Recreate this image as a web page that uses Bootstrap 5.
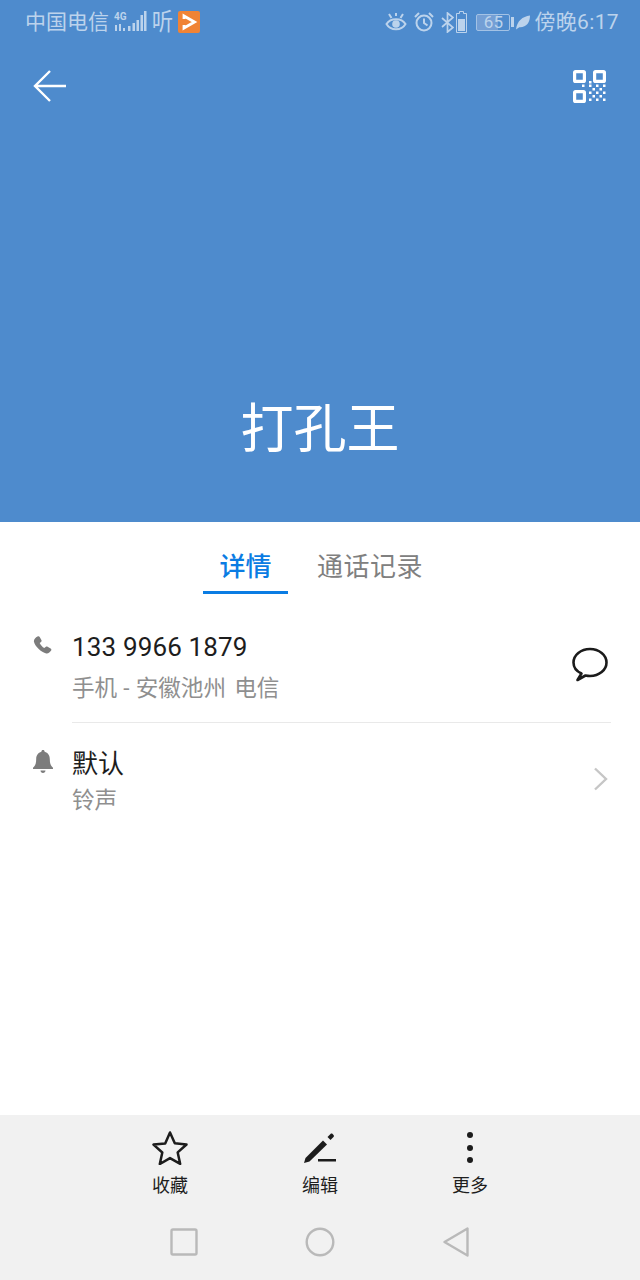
<!DOCTYPE html>
<html lang="zh"><head><meta charset="utf-8"><title>打孔王</title>
<link href="https://cdn.jsdelivr.net/npm/bootstrap@5.3.0/dist/css/bootstrap.min.css" rel="stylesheet">
<style>
html,body{width:640px;height:1280px;overflow:hidden;background:#fff}
body,.app-shell{font-family:Roboto,"Noto Sans CJK SC",sans-serif}
.app-shell{width:640px;height:1280px}
.hero-pane{height:522px;background:#4e8bcd;color:#fff}
.status-row{height:44px;padding:0 21px 0 25px;color:#bcd3ec;font-size:21px;line-height:44px}
.status-row svg{display:block;flex:none}
.gap-sig{margin-left:5px}
.gap-ting{margin-left:5px;display:inline-block;transform:scale(1.02,1.12)}
.gap-logo{margin-left:5px}
.gap-clock{margin-left:7px}
.gap-bt{margin-left:7px}
.gap-cell{margin-left:2px}
.batt-box{margin-left:9px;width:34px;height:17px;border:1px solid #a3c2e5;border-radius:2px;font-size:17px;line-height:15px;text-align:center;background:linear-gradient(90deg,#749fd5 65%,transparent 65%)}
.gap-tail{margin-left:1px}
.gap-leaf{margin-left:2px}
.clock-text{margin-left:4px;letter-spacing:.35px}
.tool-row{height:84px;padding:0 34px 0 33px}
.contact-name{font-size:53px;line-height:60px;padding-bottom:62px}
.tab-strip{height:72px;padding-left:203px;gap:29px}
.tab-item{font-size:26px;line-height:36px;height:72px;padding-top:27px;color:#808080;text-align:center}
.tab-item.is-log{letter-spacing:.5px}
.tab-item.is-on{width:85px;color:#0a7ce3;border-bottom:3px solid #0a7ce3;font-weight:500}
.info-row{padding:0 32px 0 33px}
.info-ico{width:39px;flex:none}
.phone-ico{margin-top:7px}
.bell-ico{margin-top:4px}
.msg-ico{margin-top:18px}
.chev-ico{margin-top:21px}
.row-phone{height:128px;padding-top:35px}
.row-ring{padding-top:23px}
.main-text{font-size:26px;line-height:36px;color:#1d1d1d}
.num-text{letter-spacing:.15px}
.sub-text{font-size:22.6px;line-height:36px;color:#8f8f8f}
.row-phone .sub-text{margin-top:6px;word-spacing:.5px}
.carrier-gap{margin-left:2px}
.row-ring .sub-text{line-height:38px}
.rule-line{margin-left:72px;margin-right:29px;height:1px;background:#e9e9e9}
.bottom-pane{height:165px;background:#f1f1f1}
.act-row{height:94px;padding-top:15px}
.act-cell{width:150px;font-size:18px;line-height:24px;color:#1e1e1e;text-align:center}
.act-cell svg{display:block;margin:0 auto 9px}
.nav-row{height:71px;padding-bottom:5px}
.nav-cell{width:136px}
.nav-cell svg{display:block;margin:0 auto}
</style></head>
<body>
<div class="app-shell d-flex flex-column">
  <section class="hero-pane d-flex flex-column">
    <div class="status-row d-flex align-items-center justify-content-between">
      <div class="d-flex align-items-center">
        <span>中国电信</span>
        <svg width="33" height="24" viewBox="0 0 33 24" class="gap-sig"><g fill="#bcd3ec"><text x="0" y="10" font-size="10" font-family="Roboto" font-weight="700">4G</text><rect x="1" y="15" width="2" height="6"/><rect x="5" y="14" width="2" height="7"/><rect x="9" y="18" width="2" height="3"/><rect x="14" y="16" width="2.500" height="5"/><rect x="18.500" y="13" width="2.500" height="8"/><rect x="22.500" y="10" width="2.500" height="11"/><rect x="26.500" y="5" width="2.500" height="16"/><rect x="30" y="1" width="2.500" height="20"/></g></svg>
        <span class="gap-ting">听</span>
        <svg width="22" height="22" viewBox="0 0 22 22" class="gap-logo"><rect width="22" height="22" rx="2" fill="#f08335"/><path d="M6 8V5l10.500 6L6 17v-3" fill="none" stroke="#fff" stroke-width="2.800"/></svg>
      </div>
      <div class="d-flex align-items-center">
        <svg width="22" height="20" viewBox="0 0 22 20"><g fill="none" stroke="#bcd3ec" stroke-width="2"><path d="M1.500 12c4-6.500 15-6.500 19 0-4 7-15 7-19 0z"/><path d="M4 2l2.500 4M18 2l-2.500 4M11 1v3"/></g><circle cx="11" cy="12" r="3.800" fill="#bcd3ec"/></svg>
        <svg width="20" height="20" viewBox="0 0 20 20" class="gap-clock"><g fill="none" stroke="#bcd3ec" stroke-width="2"><circle cx="10" cy="11" r="7.500"/><path d="M10 6.500V11l3.500 2.500M1 5l4-4M19 5l-4-4"/></g></svg>
        <svg width="13" height="21" viewBox="0 0 13 21" class="gap-bt"><path d="M1 6l11 9.500-5.500 4.500V1L12 5.500 1 15" fill="none" stroke="#bcd3ec" stroke-width="1.700"/></svg>
        <svg width="11" height="22" viewBox="0 0 11 22" class="gap-cell"><path d="M3.500.5h4v2h3v19H.5v-19h3z" fill="none" stroke="#bcd3ec"/><rect x="2" y="8" width="7" height="12" fill="#bcd3ec"/></svg>
        <div class="batt-box">65</div>
        <svg width="3" height="10" viewBox="0 0 3 10" class="gap-tail"><rect width="3" height="10" fill="#bcd3ec"/></svg>
        <svg width="14" height="15" viewBox="0 0 15 15" class="gap-leaf"><path d="M0 15C1 6 7 1 15 0c0 8-4 13-11.500 12.500z" fill="#bcd3ec"/></svg>
        <span class="clock-text">傍晚6:17</span>
      </div>
    </div>
    <div class="tool-row d-flex align-items-center justify-content-between">
      <svg width="34" height="34" viewBox="0 0 34 34" fill="none" stroke="#fff" stroke-width="2.400"><path d="M17 2L2 17l15 15M2 17h31"/></svg>
      <svg width="33" height="33" viewBox="0 0 33 33"><g fill="none" stroke="#fff" stroke-width="3.200"><rect x="1.600" y="1.600" width="9.800" height="9.800" rx="1"/><rect x="21.600" y="1.600" width="9.800" height="9.800" rx="1"/><rect x="1.600" y="21.600" width="9.800" height="9.800" rx="1"/></g><g fill="#fff"><rect x="16" y="11" width="2.500" height="2.500"/><rect x="9" y="14.500" width="2.500" height="2.500"/><rect x="16" y="14.500" width="2.500" height="2.500"/><rect x="23" y="14.500" width="2.500" height="2.500"/><rect x="30" y="14.500" width="2.500" height="2.500"/><rect x="19.500" y="18" width="2.500" height="2.500"/><rect x="26.500" y="18" width="2.500" height="2.500"/><rect x="16" y="21.500" width="2.500" height="2.500"/><rect x="23" y="21.500" width="2.500" height="2.500"/><rect x="30" y="21.500" width="2.500" height="2.500"/><rect x="19.500" y="25" width="2.500" height="2.500"/><rect x="26.500" y="25" width="2.500" height="2.500"/><rect x="16" y="28.500" width="2.500" height="2.500"/><rect x="23" y="28.500" width="2.500" height="2.500"/><rect x="30" y="28.500" width="2.500" height="2.500"/></g></svg>
    </div>
    <div class="contact-name mt-auto text-center">打孔王</div>
  </section>
  <nav class="tab-strip d-flex">
    <div class="tab-item is-on">详情</div>
    <div class="tab-item is-log">通话记录</div>
  </nav>
  <section class="flex-grow-1">
    <div class="info-row row-phone d-flex">
      <div class="info-ico"><svg width="20" height="20" viewBox="0 0 20 20" class="d-block phone-ico"><path d="M4.500.5c1-.7 1.700-.3 2.200.5l1.700 3c.4.800.2 1.400-.4 2l-1.300 1c.5 1.400 2.900 4.300 4.600 5.100l1.300-1.200c.6-.5 1.300-.6 2-.2l3 1.700c.8.500 1 1.300.5 2.100-1 1.700-2.800 3.200-4.800 2.900C8.300 16.900 1.700 10 .9 5.600.6 3.500 2.600 1.500 4.500.5z" fill="#7c7c7c"/></svg></div>
      <div class="flex-grow-1">
        <div class="main-text num-text">133 9966 1879</div>
        <div class="sub-text">手机 - 安徽池州 <span class="carrier-gap">电信</span></div>
      </div>
      <svg width="37" height="35" viewBox="0 0 37 35" class="align-self-start msg-ico"><path d="M10.500 26.500C5.500 24.300 2.500 20.300 2.500 15.500 2.500 8 9.800 2 19 2s16.500 6 16.500 13.500S28.200 29 19 29c-1.600 0-3-.2-4.500-.5L6.500 33z" fill="none" stroke="#1b1b1b" stroke-width="2.600" stroke-linejoin="round"/></svg>
    </div>
    <div class="rule-line"></div>
    <div class="info-row row-ring d-flex">
      <div class="info-ico"><svg width="20" height="24" viewBox="0 0 20 24" class="d-block bell-ico"><path d="M10 0c1 0 1.600.7 1.600 1.700C15 2.500 16.800 5.500 16.800 9c0 4 .7 6.500 3.200 8.800V19H0v-1.200C2.500 15.500 3.200 13 3.200 9c0-3.500 1.800-6.500 5.200-7.300C8.400.7 9 0 10 0zM7.500 20.500h5c0 1.400-1.100 2.500-2.500 2.500s-2.500-1.100-2.500-2.500z" fill="#7c7c7c"/></svg></div>
      <div class="flex-grow-1">
        <div class="main-text">默认</div>
        <div class="sub-text">铃声</div>
      </div>
      <svg width="15" height="24" viewBox="0 0 15 24" class="align-self-start chev-ico" fill="none" stroke="#c6c6c6" stroke-width="2.400"><path d="M2 1.500L13 12 2 22.500"/></svg>
    </div>
  </section>
  <footer class="bottom-pane">
    <div class="act-row d-flex justify-content-center">
      <div class="act-cell"><svg width="36" height="35" viewBox="0 0 36 35"><path d="M18 2.500l4.800 10.800 11.700 1.200-8.800 7.900 2.500 11.500L18 28.100 7.800 34l2.500-11.500-8.800-7.900 11.700-1.200z" fill="none" stroke="#1c1c1c" stroke-width="2.500" stroke-linejoin="round"/></svg>收藏</div>
      <div class="act-cell"><svg width="36" height="35" viewBox="0 0 36 35"><path d="M2 33l1.500-5L21 10.500l4 4L7.500 31.500z" fill="#1c1c1c"/><path d="M25.500 7l3-3c.6-.6 1.500-.6 2.100 0l.9.900c.6.600.6 1.500 0 2.100l-3 3z" fill="#1c1c1c"/><rect x="16" y="29" width="18" height="2.500" fill="#1c1c1c"/></svg>编辑</div>
      <div class="act-cell"><svg width="36" height="35" viewBox="0 0 36 35" fill="#1c1c1c"><circle cx="18" cy="5" r="3"/><circle cx="18" cy="18" r="3"/><circle cx="18" cy="30" r="3"/></svg>更多</div>
    </div>
    <div class="nav-row d-flex justify-content-center align-items-center">
      <div class="nav-cell"><svg width="28" height="28" viewBox="0 0 28 28"><rect x="1.500" y="1.500" width="25" height="25" rx="1.500" fill="none" stroke="#b9b9b9" stroke-width="2.400"/></svg></div>
      <div class="nav-cell"><svg width="30" height="30" viewBox="0 0 30 30"><circle cx="15" cy="15" r="13.300" fill="none" stroke="#b9b9b9" stroke-width="2.400"/></svg></div>
      <div class="nav-cell"><svg width="26" height="30" viewBox="0 0 26 30"><path d="M24.500 1.500v27L1.500 15z" fill="none" stroke="#b9b9b9" stroke-width="2.400" stroke-linejoin="round"/></svg></div>
    </div>
  </footer>
</div>
<script src="https://cdn.jsdelivr.net/npm/bootstrap@5.3.0/dist/js/bootstrap.bundle.min.js"></script>
</body></html>
